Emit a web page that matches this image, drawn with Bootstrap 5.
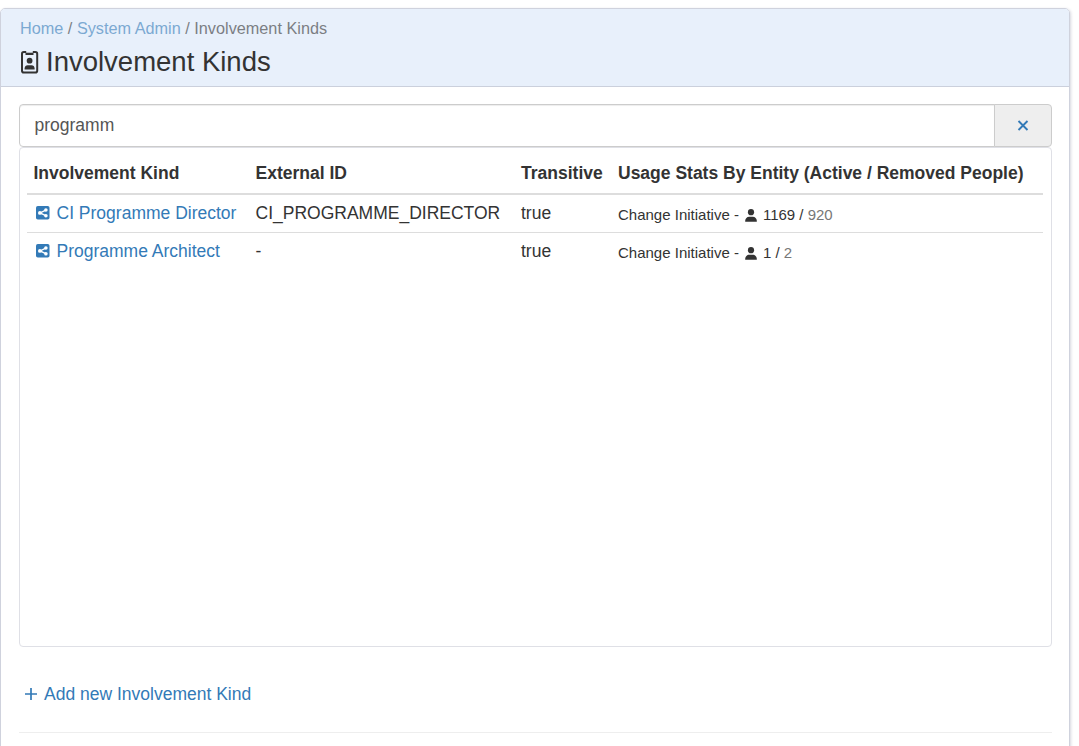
<!DOCTYPE html>
<html lang="en">
<head>
<meta charset="utf-8">
<meta name="viewport" content="width=device-width, initial-scale=1">
<title>Involvement Kinds</title>
<link href="https://cdn.jsdelivr.net/npm/bootstrap@5.3.0/dist/css/bootstrap.min.css" rel="stylesheet">
<style>
  html, body { height: 100%; overflow: hidden; }
  body { font-family: "Liberation Sans", Arial, sans-serif; font-size: 17.5px; line-height: 25px; color: #333; background: #fff; }
  a { color: #337ab7; text-decoration: none; }
  .page-panel { width: 1070px; height: 760px; margin-top: 8px; border: 1px solid #cfd2dd; border-radius: 5px; box-shadow: 1px 1px 3px rgba(60,60,100,.2); }
  .page-head { height: 78px; padding: 7px 19px 0; background: #e8f0fb; border-bottom: 1px solid #cbd0dc; border-radius: 4px 4px 0 0; }
  .crumbs { font-size: 16.25px; line-height: 24px; opacity: .6; }
  .page-title { font-size: 27.5px; line-height: 34px; margin: 5px 0 0; font-weight: 400; }
  .page-title svg { margin-right: 7px; }
  .page-body { padding: 17px 17px 0 18px; }
  .search { height: 43px; }
  .search .form-control { font-size: 17.5px; color: #555; border-color: #ccc; border-radius: 4px 0 0 4px; padding: 0 15px 0 14.5px; box-shadow: inset 0 1px 1px rgba(0,0,0,.075); }
  .search .btn { display: flex; align-items: center; justify-content: center; width: 58px; background: #eee; border-color: #ccc; border-radius: 0 4px 4px 0; padding: 0; }
  .results { height: 500px; padding: 0 8px 0 7px; border: 1px solid #dfe0e6; border-radius: 4px; }
  .kinds { table-layout: fixed; --bs-table-color: #333; --bs-table-bg: transparent; border-color: #ddd; line-height: 25px; }
  .kinds th, .kinds td { padding: 6px 0 6px 6.5px; white-space: nowrap; }
  .kinds > thead th { height: 46px; padding: 13px 0 5px 6.5px; border-bottom: 2px solid #ddd; vertical-align: top; }
  .kinds td { height: 38px; vertical-align: top; }
  .kinds tbody tr:last-child td { border-bottom: 0; }
  .stats { font-size: 15px; padding-top: 3px; line-height: 22px; }
  .stats svg { margin: 0 6px; }
  .removed { color: #777; }
  svg { display: inline-block; flex: none; }
  .kind-link svg { margin: 0 7px 1px 2px; }
  .add-link { margin: 35px 0 0 6px; }
  .add-link svg { margin: 0 7px 1px 0; }
  .rule { margin: 25px 0 0; border-top: 1px solid #eee; opacity: 1; }
</style>
</head>
<body>
<svg width="0" height="0" class="position-absolute" aria-hidden="true">
  <symbol id="share" viewBox="0 0 14 14"><rect width="13.500" height="13.500" rx="1.800" fill="#337ab7"/><path d="M9.700 4.100 4.100 6.900l5.600 2.800" fill="none" stroke="#fff" stroke-width="1.300"/><g fill="#fff"><circle cx="9.900" cy="4" r="1.800"/><circle cx="3.900" cy="6.900" r="1.900"/><circle cx="9.900" cy="9.800" r="1.800"/></g></symbol>
  <symbol id="person" viewBox="0 0 12 13"><g fill="#333"><circle cx="6" cy="3.200" r="3.100"/><path d="M.2 12.700v-.9C.2 9.400 2 7.700 4.200 7.700h3.600c2.200 0 4 1.700 4 4.100v.9z"/></g></symbol>
</svg>
<main class="page-panel">
  <header class="page-head">
    <div class="crumbs"><a href="#">Home</a> / <a href="#">System Admin</a> / <span>Involvement Kinds</span></div>
    <h1 class="page-title d-flex align-items-center"><svg width="19" height="24" viewBox="0 0 19 24" aria-hidden="true"><rect x="2" y="2" width="15.200" height="20.600" rx="1.800" fill="none" stroke="#333" stroke-width="2"/><path d="M5.500 1.500h8v3.500h-8z" fill="#333"/><path d="M6.200 1h6.600v1.700H6.200z" fill="#e8f0fb"/><circle cx="9.600" cy="10.700" r="2.900" fill="#333"/><path d="M4.600 19.400v-.8c0-2.200 1.300-3.400 3.100-3.400h3.800c1.800 0 3.100 1.200 3.100 3.400v.8z" fill="#333"/></svg><span>Involvement Kinds</span></h1>
  </header>
  <div class="page-body">
    <div class="input-group search">
      <input class="form-control" type="text" value="programm" aria-label="Search">
      <button class="btn" type="button" aria-label="Clear"><svg width="12" height="12" viewBox="0 0 12 12"><path d="M1.500 1l9 9m0-9l-9 9" stroke="#337ab7" stroke-width="1.900"/></svg></button>
    </div>
    <div class="results">
      <table class="table kinds mb-0">
        <colgroup><col style="width:222px"><col style="width:265.500px"><col style="width:97px"><col></colgroup>
        <thead><tr><th>Involvement Kind</th><th>External ID</th><th>Transitive</th><th>Usage Stats By Entity (Active / Removed People)</th></tr></thead>
        <tbody>
          <tr>
            <td><a href="#" class="kind-link d-flex align-items-center"><svg width="14" height="14"><use href="#share"/></svg>CI Programme Director</a></td>
            <td>CI_PROGRAMME_DIRECTOR</td><td>true</td>
            <td><div class="stats d-flex align-items-center"><span>Change Initiative -</span><svg width="12" height="13"><use href="#person"/></svg><span>1169 / <span class="removed">920</span></span></div></td>
          </tr>
          <tr>
            <td><a href="#" class="kind-link d-flex align-items-center"><svg width="14" height="14"><use href="#share"/></svg>Programme Architect</a></td>
            <td>-</td><td>true</td>
            <td><div class="stats d-flex align-items-center"><span>Change Initiative -</span><svg width="12" height="13"><use href="#person"/></svg><span>1 / <span class="removed">2</span></span></div></td>
          </tr>
        </tbody>
      </table>
    </div>
    <a href="#" class="add-link d-flex align-items-center"><svg width="12" height="12" viewBox="0 0 12 12"><path d="M6 0v12M0 6h12" stroke="#337ab7" stroke-width="1.700"/></svg>Add new Involvement Kind</a>
    <hr class="rule">
  </div>
</main>
<script src="https://cdn.jsdelivr.net/npm/bootstrap@5.3.0/dist/js/bootstrap.bundle.min.js"></script>
</body>
</html>
